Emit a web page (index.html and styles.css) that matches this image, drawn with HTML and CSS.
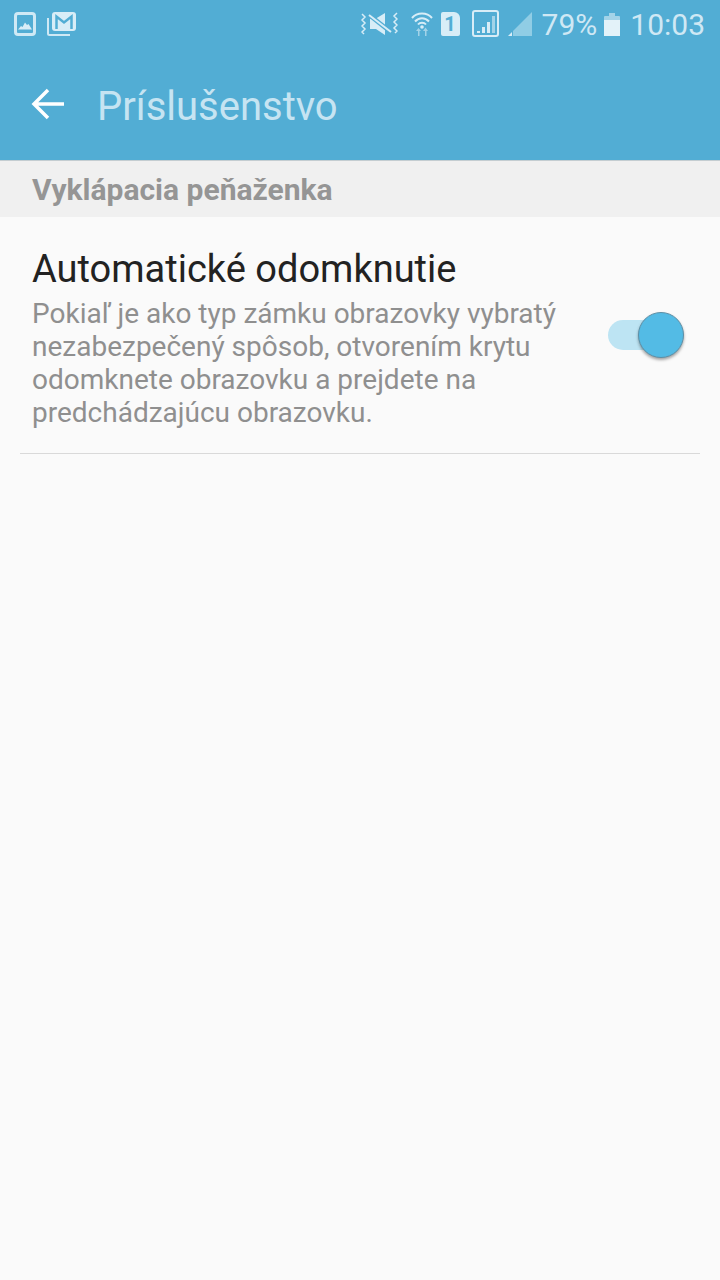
FILE: index.html
```html
<!DOCTYPE html>
<html lang="sk">
<head>
<meta charset="utf-8">
<title>Príslušenstvo</title>
<link rel="stylesheet" href="styles.css">
</head>
<body>
<header class="appbar">
  <div class="status">
    <div class="status-left">
      <svg class="ic" width="22" height="24" viewBox="0 0 22 24"><rect x="1.500" y="1.500" width="19" height="21" rx="2.500" fill="none" stroke="#cfe9f5" stroke-width="3"/><path d="M4 17.500L7 14L8.500 15L11 10.500L13 13L14.500 12L18 17.500Z" fill="#d8edf7"/></svg>
      <svg class="ic" width="29" height="24" viewBox="0 0 29 24"><path d="M1 6V21.500a1.500 1.500 0 0 0 1.500 1.500H23" fill="none" stroke="#cfe9f5" stroke-width="2"/><rect x="5" y="0" width="24" height="19" rx="3" fill="#d8edf7"/><path d="M9.500 17V4.500L17 10.500L24.500 4.500V17" fill="none" stroke="#52add4" stroke-width="2.500"/></svg>
    </div>
    <div class="status-right">
      <svg class="ic mute" width="37" height="24" viewBox="0 0 37 24"><path d="M1 2l3 3-3 3 3 3-3 3 3 3-3 3 2 2M36 1l-3 3 3 3-3 3 3 3-3 3 3 3-2 2" fill="none" stroke="#d8edf7" stroke-width="1.500"/><path d="M9 6.500h6L24 1V23L15 17H9Z" fill="#d8edf7"/><path d="M7 2L31 21" stroke="#52add4" stroke-width="4.500"/><path d="M8 3L30 20" stroke="#d8edf7" stroke-width="2"/></svg>
      <svg class="ic wifi" width="22" height="24" viewBox="0 0 22 24"><path d="M1 6C6 0 16 0 21 6M4 9.500C8 5 14 5 18 9.500M7 12.500C9 10 13 10 15 12.500" fill="none" stroke="#d8edf7" stroke-width="2"/><circle cx="11" cy="15" r="1.800" fill="#d8edf7"/><path d="M7 24V19H5L7.500 16L10 19H8.500V24Z" fill="#a3d3e8"/><path d="M14 24V19H12L14.500 15.500L17 19H15.500V24Z" fill="#a3d3e8"/></svg>
      <div class="sim">1</div>
      <svg class="ic signal" width="27" height="27" viewBox="0 0 27 27"><rect x="1" y="1" width="25" height="25" rx="2" fill="none" stroke="#d8edf7" stroke-width="2"/><path d="M5 21h3v2H5ZM10 17h3v6h-3ZM15 12h3v11h-3Z" fill="#d8edf7"/><path d="M20 6h3v17h-3Z" fill="#a3d3e8"/></svg>
      <svg class="ic tri" width="24" height="24" viewBox="0 0 24 24"><path d="M24 0V24H5V19Z" fill="#90cde5"/><path d="M0 24L4 20V24Z" fill="#d8edf7"/></svg>
      <span class="pct">79%</span>
      <svg class="ic batt" width="16" height="24" viewBox="0 0 16 24"><path d="M0 5a1 1 0 0 1 1-1h4V1h6v3h4a1 1 0 0 1 1 1v3H0Z" fill="#a3d3e8"/><rect y="8" width="16" height="16" fill="#e3f2f9"/></svg>
      <span class="clock">10:03</span>
    </div>
  </div>
  <div class="toolbar">
    <svg class="back" width="34" height="32" viewBox="0 0 34 32"><path d="M33 16H3M17 2L3 16L17 30" fill="none" stroke="#fff" stroke-width="3.500"/></svg>
    <h1 class="title">Príslušenstvo</h1>
  </div>
</header>
<main class="content">
  <div class="section">Vyklápacia peňaženka</div>
  <section class="row">
    <div class="row-text">
      <div class="row-title">Automatické odomknutie</div>
      <div class="row-desc">Pokiaľ je ako typ zámku obrazovky vybratý nezabezpečený spôsob, otvorením krytu odomknete obrazovku a prejdete na predchádzajúcu obrazovku.</div>
    </div>
    <div class="switch"><div class="thumb"></div></div>
  </section>
</main>
</body>
</html>
```

FILE: styles.css
```css
* { box-sizing: border-box; }
html, body { margin: 0; padding: 0; }
body {
  width: 720px;
  height: 1280px;
  background: #fafafa;
  font-family: Roboto, "Noto Sans", sans-serif;
  overflow: hidden;
}
.appbar {
  background: #52add4;
  height: 161px;
  border-bottom: 1px solid #c4cdd1;
}
.status {
  height: 48px;
  display: flex;
  justify-content: space-between;
  align-items: flex-start;
  padding: 12px 15px 0 14px;
}
.status-left { display: flex; gap: 11px; align-items: flex-start; }
.status-right { display: flex; align-items: flex-start; }
.ic { display: block; flex: none; }
.wifi { margin-left: 13px; }
.sim {
  width: 19px;
  height: 24px;
  margin-left: 8px;
  background: #d8edf7;
  color: #52add4;
  border-radius: 2px 6px 2px 2px;
  font-size: 20px;
  font-weight: 700;
  line-height: 25px;
  text-align: center;
}
.signal { margin-left: 12px; margin-top: -2px; }
.tri { margin-left: 9px; }
.pct, .clock {
  color: #cfe8f4;
  font-size: 30px;
  line-height: 26px;
}
.pct { margin-left: 10px; }
.batt { margin-left: 7px; }
.clock { margin-left: 10px; }
.toolbar {
  height: 112px;
  display: flex;
  align-items: center;
  padding: 6px 0 0 31px;
}
.back { display: block; flex: none; margin-top: -6px; }
.title {
  margin: 0 0 0 32px;
  color: #c6e4f2;
  font-size: 40px;
  font-weight: 400;
  line-height: 44px;
}
.section {
  height: 56px;
  background: #f0f0f0;
  color: #959595;
  font-size: 30px;
  font-weight: 700;
  line-height: 58px;
  padding-left: 32px;
}
.row {
  margin: 0 20px;
  height: 237px;
  border-bottom: 1px solid #d9d9d9;
  display: flex;
  align-items: center;
  padding: 0 16px 0 12px;
}
.row-text { width: 560px; flex: none; padding-top: 6px; }
.row-title {
  color: #222222;
  font-size: 38px;
  line-height: 44px;
  margin-bottom: 6px;
}
.row-desc {
  color: #8f8f8f;
  font-size: 28px;
  line-height: 33.200px;
}
.switch {
  position: relative;
  width: 60px;
  height: 30px;
  margin-left: 16px;
  border-radius: 15px;
  background: #bde4f3;
}
.thumb {
  position: absolute;
  left: 30px;
  top: -8px;
  width: 46px;
  height: 46px;
  border-radius: 50%;
  background: #53bbe5;
  border: 1px solid #5d8fa6;
  box-shadow: 0 2px 3px rgba(0,0,0,.35);
}
```
